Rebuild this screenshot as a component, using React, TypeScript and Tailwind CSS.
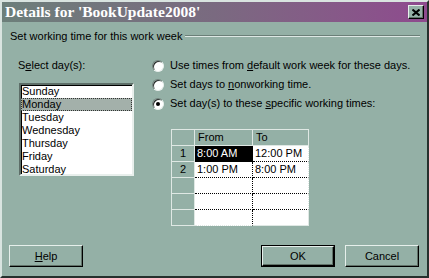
import React from "react";

const days = ["Sunday", "Monday", "Tuesday", "Wednesday", "Thursday", "Friday", "Saturday"];

function Radio({ checked }: { checked?: boolean }) {
  return (
    <div className="w-[12px] h-[12px] rounded-full bg-white border border-t-[#6f807a] border-l-[#6f807a] border-r-[#e9f0ed] border-b-[#e9f0ed] shadow-[inset_1px_1px_0_#2a2f2d] flex items-center justify-center shrink-0">
      {checked && <div className="w-[4px] h-[4px] rounded-full bg-black" />}
    </div>
  );
}

function Btn({ children, def }: { children: React.ReactNode; def?: boolean }) {
  const inner = (
    <div className="w-full h-full bg-[#94b0a6] border border-t-[#e6efeb] border-l-[#e6efeb] border-r-black border-b-black shadow-[inset_-1px_-1px_0_#617269] flex items-center justify-center">
      {children}
    </div>
  );
  return def ? (
    <div className="w-[74px] h-[22px] border border-black">{inner}</div>
  ) : (
    <div className="w-[74px] h-[22px]">{inner}</div>
  );
}

export default function App() {
  const rows = [
    ["1", "8:00 AM", "12:00 PM"],
    ["2", "1:00 PM", "8:00 PM"],
    ["", "", ""],
    ["", "", ""],
    ["", "", ""],
  ];
  return (
    <div className="w-[429px] h-[278px] bg-[#94b0a6] border-2 border-t-[#d9e4e0] border-l-[#d9e4e0] border-r-[#26302d] border-b-[#26302d] flex flex-col font-['Liberation_Sans',sans-serif] text-[11px] leading-[13px] text-black">
      {/* Title bar */}
      <div className="h-[20px] bg-gradient-to-r from-[#6c7f7a] via-[#7a6a80] to-[#8e4a8e] flex items-center justify-between pl-[3px] pr-[3px]">
        <span className="font-['Liberation_Serif',serif] font-bold text-[15.5px] leading-[20px] text-white">
          Details for 'BookUpdate2008'
        </span>
        <div className="w-[16px] h-[14px] bg-[#94b0a6] border border-t-[#e6efeb] border-l-[#e6efeb] border-r-black border-b-black shadow-[inset_-1px_-1px_0_#617269] flex items-center justify-center">
          <svg width="8" height="7" viewBox="0 0 8 7">
            <path d="M0.5 0.5 L7.5 6.5 M7.5 0.5 L0.5 6.5" stroke="black" strokeWidth="2" />
          </svg>
        </div>
      </div>

      {/* Group heading */}
      <div className="mt-[7px] h-[14px] flex items-center pl-[8px] pr-[7px]">
        <span className="leading-[14px] whitespace-nowrap">Set working time for this work week</span>
        <div className="flex-1 ml-[3px] h-0 border-t border-b border-t-[#6b7f78] border-b-[#dde8e4]" />
      </div>

      {/* Content */}
      <div className="mt-[13px] flex">
        {/* Left column */}
        <div className="ml-[16px] w-[116px] flex flex-col">
          <div className="h-[19px] flex items-center">
            <span>
              S<span className="underline">e</span>lect day(s):
            </span>
          </div>
          <div className="mt-[8px] ml-[1px] w-[115px] h-[93px] bg-white border-2 border-t-[#5d6e68] border-l-[#5d6e68] border-r-[#e8efec] border-b-[#e8efec] shadow-[inset_1px_1px_0_#000] flex flex-col pt-[0px]">
            {days.map((d) =>
              d === "Monday" ? (
                <div key={d} className="h-[13px] bg-[#a3b0aa] border border-dotted border-[#333] pl-0 flex items-center">
                  {d}
                </div>
              ) : (
                <div key={d} className="h-[13px] pl-[1px] flex items-center">
                  {d}
                </div>
              )
            )}
          </div>
        </div>

        {/* Right column */}
        <div className="ml-[18px] flex flex-col">
          <div className="h-[19px] flex items-center gap-[6px]">
            <Radio />
            <span>
              Use times from <span className="underline">d</span>efault work week for these days.
            </span>
          </div>
          <div className="h-[19px] flex items-center gap-[6px]">
            <Radio />
            <span>
              Set days to <span className="underline">n</span>onworking time.
            </span>
          </div>
          <div className="h-[19px] flex items-center gap-[6px]">
            <Radio checked />
            <span>
              Set day(s) to these <span className="underline">s</span>pecific working times:
            </span>
          </div>

          {/* Table */}
          <div className="mt-[16px] ml-[19px] w-[138px] border-t border-l border-[#dfe8e4] grid grid-cols-[23px_58px_56px] auto-rows-[16px]">
            <div className="border-r border-b border-[#dfe8e4]" />
            <div className="border-r border-b border-[#dfe8e4] pl-[3px] flex items-center">From</div>
            <div className="border-r border-b border-[#dfe8e4] pl-[3px] flex items-center">To</div>
            {rows.map((r, i) => {
              const last = i === rows.length - 1;
              return (
                <React.Fragment key={i}>
                  <div className="border-r border-b border-[#dfe8e4] flex items-center justify-center">{r[0]}</div>
                  <div
                    className={
                      (i === 0 ? "bg-black text-white " : "bg-white ") +
                      (last ? "border-b border-b-[#dfe8e4] " : "border-b border-dotted border-b-black ") +
                      "border-r border-r-black border-dotted pl-[2px] flex items-center"
                    }
                  >
                    {r[1]}
                  </div>
                  <div
                    className={
                      "bg-white border-r border-r-[#dfe8e4] " +
                      (last ? "border-b border-b-[#dfe8e4] " : "border-b border-dotted border-b-black ") +
                      "pl-[2px] flex items-center"
                    }
                  >
                    {r[2]}
                  </div>
                </React.Fragment>
              );
            })}
          </div>
        </div>
      </div>

      {/* Buttons */}
      <div className="mt-auto mb-[9px] flex items-center pl-[7px] pr-[8px]">
        <Btn>
          <span>
            <span className="underline">H</span>elp
          </span>
        </Btn>
        <div className="flex-1" />
        <Btn def>OK</Btn>
        <div className="w-[10px]" />
        <Btn>Cancel</Btn>
      </div>
    </div>
  );
}
